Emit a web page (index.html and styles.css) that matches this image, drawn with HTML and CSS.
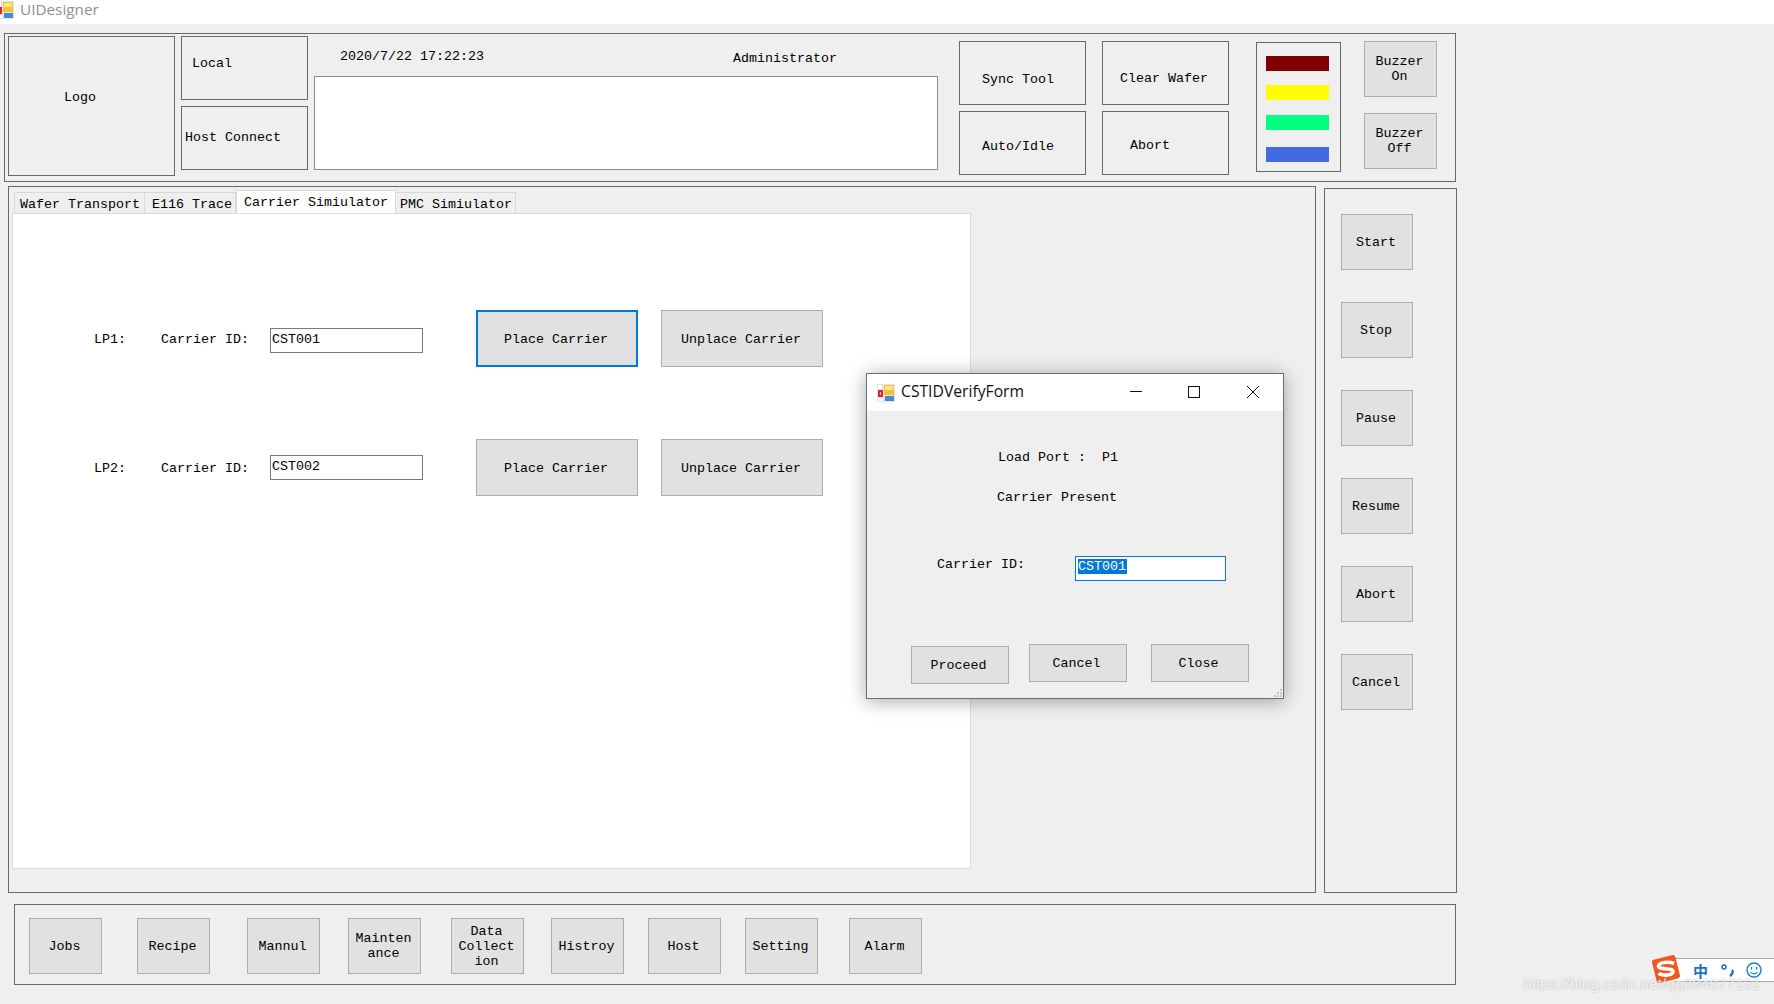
FILE: index.html

```html
<!DOCTYPE html>
<html lang="en">
<head>
    <meta charset="UTF-8">
    <title>UIDesigner</title>
    <link rel="stylesheet" href="styles.css">
</head>
<body>

    <svg class="defs" width="0" height="0">
        <symbol id="app-icon" viewBox="0 0 18 18">
            <rect x="0" y="0" width="18" height="18" fill="#e4e4e4"/>
            <rect x="1" y="1" width="4" height="4" fill="#fff"/>
            <rect x="1" y="6" width="5" height="7" fill="#d9262b"/>
            <rect x="3" y="8" width="1" height="3" fill="#f7b7b7"/>
            <rect x="7" y="1" width="10" height="10" fill="#f2c230"/>
            <rect x="8" y="2" width="8" height="4" fill="#fbe58a"/>
            <rect x="8" y="12" width="9" height="5" fill="#4a86d8"/>
            <rect x="1" y="14" width="5" height="3" fill="#fff"/>
        </symbol>
    </svg>

    <div class="titlebar">
        <svg class="titlebar-icon"><use href="#app-icon"/></svg>
        <span class="titlebar-text">UIDesigner</span>
    </div>

    <div class="top-panel">
        <div class="tile logo">Logo</div>
        <div class="status-col">
            <div class="tile local">Local</div>
            <div class="tile host-connect">Host Connect</div>
        </div>
        <div class="info-col">
            <div class="info-row">
                <span class="date">2020/7/22 17:22:23</span>
                <span class="user">Administrator</span>
            </div>
            <div class="message-box"></div>
        </div>
        <div class="cmd-grid">
            <div class="tile sync-tool">Sync Tool</div>
            <div class="tile clear-wafer">Clear Wafer</div>
            <div class="tile auto-idle">Auto/Idle</div>
            <div class="tile abort-top">Abort</div>
        </div>
        <div class="light-box">
            <div class="light red"></div>
            <div class="light yellow"></div>
            <div class="light green"></div>
            <div class="light blue"></div>
        </div>
        <div class="buzzer-col">
            <button class="btn square">Buzzer<br>On</button>
            <button class="btn square">Buzzer<br>Off</button>
        </div>
    </div>

    <div class="main">
        <div class="tab-panel">
            <div class="tabs">
                <div class="tab tab-wafer">Wafer Transport</div>
                <div class="tab tab-trace">E116 Trace</div>
                <div class="tab tab-carrier active">Carrier Simiulator</div>
                <div class="tab tab-pmc">PMC Simiulator</div>
            </div>
            <div class="tab-page">
                <div class="lp-row first">
                    <span class="lp-name">LP1:</span>
                    <span class="lp-label">Carrier ID:</span>
                    <input class="lp-input" type="text" value="CST001" readonly>
                    <button class="btn lp-btn place focused">Place Carrier</button>
                    <button class="btn lp-btn unplace">Unplace Carrier</button>
                </div>
                <div class="lp-row second">
                    <span class="lp-name">LP2:</span>
                    <span class="lp-label">Carrier ID:</span>
                    <input class="lp-input" type="text" value="CST002" readonly>
                    <button class="btn lp-btn place">Place Carrier</button>
                    <button class="btn lp-btn unplace">Unplace Carrier</button>
                </div>
            </div>
        </div>
        <div class="side-panel">
            <button class="btn square">Start</button>
            <button class="btn square">Stop</button>
            <button class="btn square">Pause</button>
            <button class="btn square">Resume</button>
            <button class="btn square">Abort</button>
            <button class="btn square">Cancel</button>
        </div>
    </div>

    <div class="bottom-panel">
        <div class="nav-cell"><button class="btn square">Jobs</button></div>
        <div class="nav-cell"><button class="btn square">Recipe</button></div>
        <div class="nav-cell"><button class="btn square">Mannul</button></div>
        <div class="nav-cell"><button class="btn square">Mainten<br>ance</button></div>
        <div class="nav-cell"><button class="btn square">Data<br>Collect<br>ion</button></div>
        <div class="nav-cell"><button class="btn square">Histroy</button></div>
        <div class="nav-cell"><button class="btn square">Host</button></div>
        <div class="nav-cell"><button class="btn square">Setting</button></div>
        <div class="nav-cell"><button class="btn square">Alarm</button></div>
    </div>

    <!-- dialog over the main form -->
    <div class="dialog">
        <div class="dialog-title">
            <svg class="dialog-icon"><use href="#app-icon"/></svg>
            <span class="dialog-name">CSTIDVerifyForm</span>
            <svg class="win-btn win-min" width="14" height="14" viewBox="0 0 14 14"><path d="M1 6.5H13" stroke="#111" fill="none"/></svg>
            <svg class="win-btn win-max" width="14" height="14" viewBox="0 0 14 14"><rect x="1.5" y="1.5" width="11" height="11" stroke="#111" fill="none"/></svg>
            <svg class="win-btn win-close" width="14" height="14" viewBox="0 0 14 14"><path d="M1 1L13 13M13 1L1 13" stroke="#111" fill="none"/></svg>
        </div>
        <div class="dialog-line load-port">Load Port :  P1</div>
        <div class="dialog-line present">Carrier Present</div>
        <div class="dialog-id">
            <span class="dialog-label">Carrier ID:</span>
            <div class="dialog-input"><span class="selected">CST001</span></div>
        </div>
        <div class="dialog-btns">
            <button class="btn dialog-btn proceed">Proceed</button>
            <button class="btn dialog-btn cancel">Cancel</button>
            <button class="btn dialog-btn close">Close</button>
        </div>
        <svg class="grip" width="10" height="10" viewBox="0 0 10 10">
            <rect x="7" y="1" width="2" height="2" fill="#c4c4c4"/>
            <rect x="4" y="4" width="2" height="2" fill="#c4c4c4"/>
            <rect x="7" y="4" width="2" height="2" fill="#c4c4c4"/>
            <rect x="1" y="7" width="2" height="2" fill="#c4c4c4"/>
            <rect x="4" y="7" width="2" height="2" fill="#c4c4c4"/>
            <rect x="7" y="7" width="2" height="2" fill="#c4c4c4"/>
        </svg>
    </div>

    <!-- input method bar -->
    <div class="ime-bar">
        <span class="ime-zh">中</span>
        <svg class="ime-punct" width="14" height="14" viewBox="0 0 14 14">
            <circle cx="3" cy="4" r="2" stroke="#1a6fc0" stroke-width="1.5" fill="none"/>
            <path d="M11 7C12.5 8 11.5 11 9 13" stroke="#1a6fc0" stroke-width="2.4" fill="none"/>
        </svg>
        <svg class="ime-smile" width="16" height="16" viewBox="0 0 16 16">
            <circle cx="8" cy="8" r="7" stroke="#1a7fd0" stroke-width="1.4" fill="none"/>
            <path d="M5.5 5V7.5M10.5 5V7.5" stroke="#1a7fd0" stroke-width="1.3"/>
            <path d="M4.5 10C6 12.4 10 12.4 11.5 10" stroke="#1a7fd0" stroke-width="1.2" fill="none"/>
        </svg>
    </div>
    <svg class="ime-logo" width="30" height="30" viewBox="0 0 30 30">
        <rect x="3" y="3" width="24" height="24" rx="3" transform="rotate(-14 15 15)" fill="#f2571f"/>
        <path d="M23 9.5C18 7.5 8 8 7.5 12C7 16 22 13.500 22 17.500C22 21 13 22.500 7.500 19.500" stroke="#fff" stroke-width="3.600" fill="none"/>
    </svg>
    <div class="watermark">https://blog.csdn.net/qq284077151</div>

</body>
</html>
```

FILE: styles.css

```css
* {
    box-sizing: border-box;
}
html, body {
    margin: 0;
    height: 1004px;
    overflow: hidden;
}
body {
    position: relative;
    background-color: #efefef;
    font-family: "Liberation Mono", monospace;
    font-size: 13.33px;
    line-height: 15px;
    color: #000;
}
.defs {
    position: absolute;
}

.titlebar {
    display: flex;
    align-items: center;
    height: 24px;
    background: white;
}
.titlebar-icon {
    width: 18px;
    height: 18px;
    margin-left: -4px;
    margin-top: -5px;
}
.titlebar-text {
    margin-left: 6px;
    margin-top: -5px;
    font-family: "Open Sans", sans-serif;
    font-size: 15.300px;
    color: #8c9196;
}

.tile {
    display: flex;
    align-items: center;
    border: 1px solid #696969;
    white-space: pre;
}
.btn {
    padding: 0;
    border: 1px solid #adadad;
    border-radius: 0;
    background-color: #e1e1e1;
    font-family: "Liberation Mono", monospace;
    font-size: 13.33px;
    line-height: 15px;
    color: #000;
}
.square {
    display: block;
    width: 73px;
    height: 56px;
    padding-right: 2px;
}

/* top panel */
.top-panel {
    display: flex;
    align-items: flex-start;
    width: 1452px;
    height: 149px;
    margin: 9px 0 0 4px;
    border: 1px solid #696969;
}
.logo {
    width: 167px;
    height: 140px;
    margin: 2px 0 0 3px;
    padding: 0 0 18px 55px;
}
.status-col {
    display: flex;
    flex-direction: column;
    gap: 6px;
    width: 127px;
    margin: 2px 0 0 6px;
}
.status-col .tile {
    height: 64px;
}
.local {
    padding: 0 0 10px 10px;
}
.host-connect {
    padding: 0 0 2px 3px;
}
.info-col {
    width: 624px;
    margin: 2px 0 0 6px;
}
.info-row {
    display: flex;
    height: 40px;
    padding: 13px 0 0 26px;
}
.user {
    margin: 2px 0 0 249px;
}
.message-box {
    height: 94px;
    background: white;
    border: 1px solid #8a8a92;
}
.cmd-grid {
    display: grid;
    grid-template-columns: 127px 127px;
    grid-template-rows: 64px 64px;
    column-gap: 16px;
    row-gap: 6px;
    margin: 7px 0 0 21px;
}
.sync-tool {
    padding: 12px 0 0 22px;
}
.clear-wafer {
    padding: 10px 0 0 17px;
}
.auto-idle {
    padding: 6px 0 0 22px;
}
.abort-top {
    padding: 4px 0 0 27px;
}
.light-box {
    width: 85px;
    height: 130px;
    margin: 8px 0 0 27px;
    padding: 13px 0 0 9px;
    border: 1px solid #696969;
}
.light {
    width: 63px;
    height: 15px;
}
.red {
    background-color: #800000;
}
.yellow {
    margin-top: 14px;
    background-color: #ffff00;
}
.green {
    margin-top: 15px;
    background-color: #00ff7f;
}
.blue {
    margin-top: 17px;
    background-color: #4169e1;
}
.buzzer-col {
    display: flex;
    flex-direction: column;
    gap: 16px;
    margin: 7px 0 0 23px;
}

/* tabs and side buttons */
.main {
    display: flex;
    align-items: flex-start;
    margin: 4px 0 0 8px;
}
.tab-panel {
    width: 1308px;
    height: 707px;
    padding: 3px 0 0 3px;
    border: 1px solid #696969;
}
.tabs {
    display: flex;
    align-items: flex-end;
    height: 23px;
    margin-left: 2px;
}
.tab {
    height: 21px;
    padding: 4px 0 0 7px;
    border: 1px solid #d9d9d9;
    border-bottom: none;
    border-left: none;
    white-space: pre;
}
.tab-wafer {
    width: 131px;
    padding-left: 5px;
    border-left: 1px solid #d9d9d9;
}
.tab-trace {
    width: 91px;
}
.tab-carrier {
    width: 160px;
}
.tab-pmc {
    width: 120px;
    padding-left: 4px;
}
.tab.active {
    height: 23px;
    padding: 4px 0 0 7px;
    background: white;
    border-left: 1px solid #d9d9d9;
}
.tab-page {
    width: 959px;
    height: 656px;
    padding-top: 96px;
    background: white;
    border: 1px solid #dcdcdc;
}
.lp-row {
    display: flex;
    align-items: center;
    height: 57px;
    padding-left: 81px;
}
.lp-row.second {
    margin-top: 72px;
}
.lp-name {
    width: 67px;
    margin-top: 2px;
}
.lp-label {
    width: 109px;
    margin-top: 2px;
}
.lp-input {
    width: 153px;
    height: 25px;
    padding: 0 0 3px 1px;
    border: 1px solid #7a7a7a;
    border-radius: 0;
    outline: none;
    font-family: "Liberation Mono", monospace;
    font-size: 13.33px;
    color: #000;
}
.first .lp-input {
    margin-top: 4px;
}
.lp-btn {
    width: 162px;
    height: 57px;
    padding: 2px 2px 0 0;
}
.place {
    margin-left: 53px;
}
.unplace {
    margin-left: 23px;
}
.focused {
    border: 2px solid #0078d7;
}
.side-panel {
    display: flex;
    flex-direction: column;
    gap: 32px;
    width: 133px;
    height: 705px;
    margin: 2px 0 0 8px;
    padding: 25px 0 0 16px;
    border: 1px solid #696969;
}
.side-panel .square {
    width: 72px;
}

/* bottom nav */
.bottom-panel {
    display: grid;
    grid-template-columns: 108px 110px 101px 103px 100px 97px 97px 104px 73px;
    width: 1442px;
    height: 81px;
    margin: 11px 0 0 14px;
    padding: 13px 0 0 14px;
    border: 1px solid #696969;
}

/* dialog */
.dialog {
    position: absolute;
    left: 866px;
    top: 373px;
    width: 418px;
    height: 326px;
    background-color: #efefef;
    border: 1px solid #6e6e6e;
    box-shadow: 0 2px 18px rgba(0, 0, 0, 0.35);
}
.dialog-title {
    display: flex;
    align-items: center;
    height: 37px;
    padding-left: 10px;
    background: white;
}
.dialog-icon {
    width: 18px;
    height: 18px;
}
.dialog-name {
    width: 228px;
    margin: -2px 0 0 6px;
    font-family: "Open Sans", sans-serif;
    font-size: 15.700px;
    color: #111;
}
.win-btn {
    display: block;
    flex: none;
    margin-top: -2px;
}
.win-max {
    margin-left: 44px;
}
.win-close {
    margin-left: 45px;
}
.dialog-line {
    white-space: pre;
}
.load-port {
    margin: 39px 0 0 131px;
}
.present {
    margin: 25px 0 0 130px;
}
.dialog-id {
    display: flex;
    margin: 52px 0 0 70px;
}
.dialog-label {
    width: 138px;
}
.dialog-input {
    width: 151px;
    height: 25px;
    margin-top: -1px;
    padding: 2px 0 0 2px;
    background: white;
    border: 1px solid #0078d7;
}
.selected {
    display: block;
    width: 49px;
    background-color: #0078d7;
    color: white;
}
.dialog-btns {
    display: flex;
    align-items: flex-start;
    margin: 63px 0 0 44px;
}
.dialog-btn {
    width: 98px;
    height: 38px;
    padding-right: 3px;
}
.proceed {
    margin-top: 2px;
}
.cancel {
    margin-left: 20px;
}
.close {
    margin-left: 24px;
}
.grip {
    position: absolute;
    right: 0;
    bottom: 0;
}

/* input method bar and watermark */
.ime-bar {
    position: absolute;
    left: 1675px;
    top: 958px;
    display: flex;
    align-items: center;
    width: 99px;
    height: 24px;
    background: white;
    border-top: 1px solid #a9a9a9;
    border-bottom: 1px solid #a9a9a9;
}
.ime-zh {
    margin-left: 18px;
    font-family: "Noto Sans CJK SC", sans-serif;
    font-size: 15px;
    font-weight: 700;
    color: #1a6fc0;
}
.ime-punct {
    margin-left: 13px;
}
.ime-smile {
    margin-left: 11px;
}
.ime-logo {
    position: absolute;
    left: 1651px;
    top: 954px;
}
.watermark {
    position: absolute;
    left: 1523px;
    top: 974px;
    font-family: "Liberation Sans", sans-serif;
    font-size: 15.500px;
    line-height: 20px;
    color: rgba(255, 255, 255, 0.75);
    text-shadow: 0 0 2px rgba(130, 130, 130, 0.6);
}
```
